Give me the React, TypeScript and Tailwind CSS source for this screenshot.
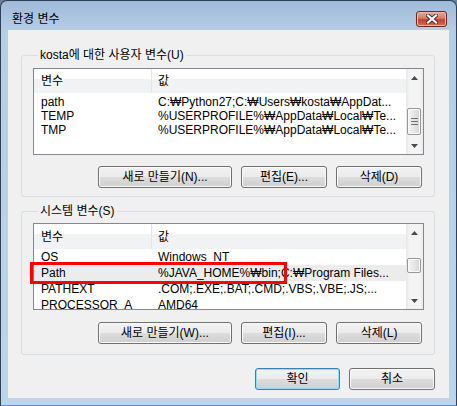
import React from "react";

type Row = [string, string];

const userRows: Row[] = [
  ["path", "C:₩Python27;C:₩Users₩kosta₩AppDat..."],
  ["TEMP", "%USERPROFILE%₩AppData₩Local₩Te..."],
  ["TMP", "%USERPROFILE%₩AppData₩Local₩Te..."],
];

const sysRows: Row[] = [
  ["OS", "Windows_NT"],
  ["Path", "%JAVA_HOME%₩bin;C:₩Program Files..."],
  ["PATHEXT", ".COM;.EXE;.BAT;.CMD;.VBS;.VBE;.JS;..."],
  ["PROCESSOR_A", "AMD64"],
];

function Btn({ children, w, primary }: { children: React.ReactNode; w: string; primary?: boolean }) {
  return (
    <button
      className={`${w} h-[22px] rounded-[3px] border text-[12px] leading-none text-black bg-[linear-gradient(to_bottom,#f2f2f2_0%,#ebebeb_50%,#dddddd_50%,#cfcfcf_100%)] ${
        primary
          ? "border-[#3c7fb1] shadow-[inset_0_0_0_1px_#93dcf6]"
          : "border-[#707070] shadow-[inset_0_0_0_1px_#fbfbfb]"
      }`}
    >
      {children}
    </button>
  );
}

function Arrow({ down }: { down?: boolean }) {
  return (
    <div className="h-[17px] flex items-center justify-center">
      <svg width="7" height="4" viewBox="0 0 7 4" className={down ? "rotate-180" : ""}>
        <path d="M3.5 0 L7 4 L0 4 Z" fill="#4a4a4a" />
      </svg>
    </div>
  );
}

function ScrollBar({ offset, size, grip }: { offset: string; size: string; grip?: boolean }) {
  return (
    <div className="w-[17px] flex flex-col bg-[linear-gradient(to_right,#e6e6e6,#f4f4f4_20%,#f4f4f4_80%,#ebebeb)]">
      <Arrow />
      <div className="flex-1">
        <div
          className={`${offset} ${size} ml-[1px] w-[14px] rounded-[2px] border border-[#979797] bg-[linear-gradient(to_right,#f4f4f4,#e6e6e6_50%,#d4d4d4)] shadow-[inset_0_0_0_1px_#fbfbfb] flex flex-col items-center justify-center gap-[2px]`}
        >
          {grip && (
            <>
              <div className="w-[7px] h-[1px] bg-[#6f6f6f]" />
              <div className="w-[7px] h-[1px] bg-[#6f6f6f]" />
              <div className="w-[7px] h-[1px] bg-[#6f6f6f]" />
            </>
          )}
        </div>
      </div>
      <Arrow down />
    </div>
  );
}

function ListView({
  rows,
  headerH,
  rowH,
  rowsTop,
  selected,
  scroll,
  children,
}: {
  rows: Row[];
  headerH: string;
  rowH: string;
  rowsTop: string;
  selected?: number;
  scroll: React.ReactNode;
  children?: React.ReactNode;
}) {
  return (
    <div className="relative h-[87px] border border-[#828790] bg-white flex">
      <div className="flex-1 flex flex-col overflow-hidden">
        <div
          className={`${headerH} shrink-0 flex items-center bg-[linear-gradient(to_bottom,#ffffff_0%,#ffffff_40%,#f1f2f4_40%,#f1f2f4_100%)]`}
        >
          <div className="w-[118px] h-full flex items-center pl-[7px] border-r border-[#e3e5e8]">변수</div>
          <div className="pl-[6px]">값</div>
        </div>
        <div className={`${rowsTop} flex flex-col`}>
          {rows.map(([name, value], i) => (
            <div
              key={name}
              className={`${rowH} shrink-0 flex items-center whitespace-nowrap ${i === selected ? "bg-[#ececec]" : ""}`}
            >
              <div className="w-[118px] pl-[7px]">{name}</div>
              <div className="pl-[6px]">{value}</div>
            </div>
          ))}
        </div>
      </div>
      {scroll}
      {children}
    </div>
  );
}

export default function App() {
  return (
    <div className="w-[457px] h-[406px] bg-[#6d819a] font-['Liberation_Sans','Noto_Sans_CJK_KR',sans-serif] text-[12px] text-black">
      <div className="h-full flex flex-col rounded-t-[7px] border border-[#34404f] border-b-[#2aa6d2] bg-[linear-gradient(to_bottom,#9fbad8_0px,#b6cde6_30px,#bdd5ec_100%)]">
        {/* title bar */}
        <div className="h-[29px] shrink-0 flex items-start justify-between pl-[11px] pr-[9px] pt-[10px]">
          <span className="leading-[16px]">환경 변수</span>
          <div className="w-[31px] h-[16px] rounded-[3px] border border-[#6a2a22] bg-[linear-gradient(to_bottom,#e9a99b_0%,#d77a66_45%,#c2412c_55%,#d86a50_100%)] shadow-[inset_0_0_0_1px_#f0b5a8] flex items-center justify-center">
            <svg width="12" height="10" viewBox="0 0 12 10">
              <path d="M2 1.5 L10 8.5 M10 1.5 L2 8.5" stroke="#4b2a28" strokeWidth="4" strokeLinecap="square" />
              <path d="M2 1.5 L10 8.5 M10 1.5 L2 8.5" stroke="#ffffff" strokeWidth="2.2" strokeLinecap="square" />
            </svg>
          </div>
        </div>

        {/* client */}
        <div className="h-[368px] mx-[7px] bg-[#f0f0f0] pl-[13px] pr-[14px] pt-[17px] flex flex-col">
          <fieldset className="rounded-[3px] border border-[#d5dfe5] pl-[11px] pr-[10px] pt-[5px] pb-[8px]">
            <legend className="ml-[5px] px-[2px] leading-[16px]">kosta에 대한 사용자 변수(U)</legend>
            <ListView
              rows={userRows}
              headerH="h-[24px]"
              rowH="h-[14px]"
              rowsTop="pt-[2px]"
              scroll={<ScrollBar offset="mt-[22px]" size="h-[27px]" grip />}
            />
            <div className="mt-[11px] flex justify-end gap-[9px] pr-[2px]">
              <Btn w="w-[134px]">새로 만들기(N)...</Btn>
              <Btn w="w-[86px]">편집(E)...</Btn>
              <Btn w="w-[86px]">삭제(D)</Btn>
            </div>
          </fieldset>

          <fieldset className="mt-[6px] rounded-[3px] border border-[#d5dfe5] pl-[11px] pr-[10px] pt-[4px] pb-[10px]">
            <legend className="ml-[5px] px-[2px] leading-[16px]">시스템 변수(S)</legend>
            <ListView
              rows={sysRows}
              headerH="h-[25px]"
              rowH="h-[16px]"
              rowsTop="pt-0"
              selected={1}
              scroll={<ScrollBar offset="mt-[17px]" size="h-[15px]" />}
            >
              <div className="absolute left-[-4px] top-[38px] w-[257px] h-[22px] border-[3px] border-[#ff0000]" />
            </ListView>
            <div className="mt-[12px] flex justify-end gap-[9px] pr-[2px]">
              <Btn w="w-[134px]">새로 만들기(W)...</Btn>
              <Btn w="w-[86px]">편집(I)...</Btn>
              <Btn w="w-[86px]">삭제(L)</Btn>
            </div>
          </fieldset>

          <div className="mt-[13px] flex justify-end gap-[9px] pr-[-1px]">
            <Btn w="w-[85px]" primary>
              확인
            </Btn>
            <Btn w="w-[86px]">취소</Btn>
          </div>
        </div>
      </div>
    </div>
  );
}
